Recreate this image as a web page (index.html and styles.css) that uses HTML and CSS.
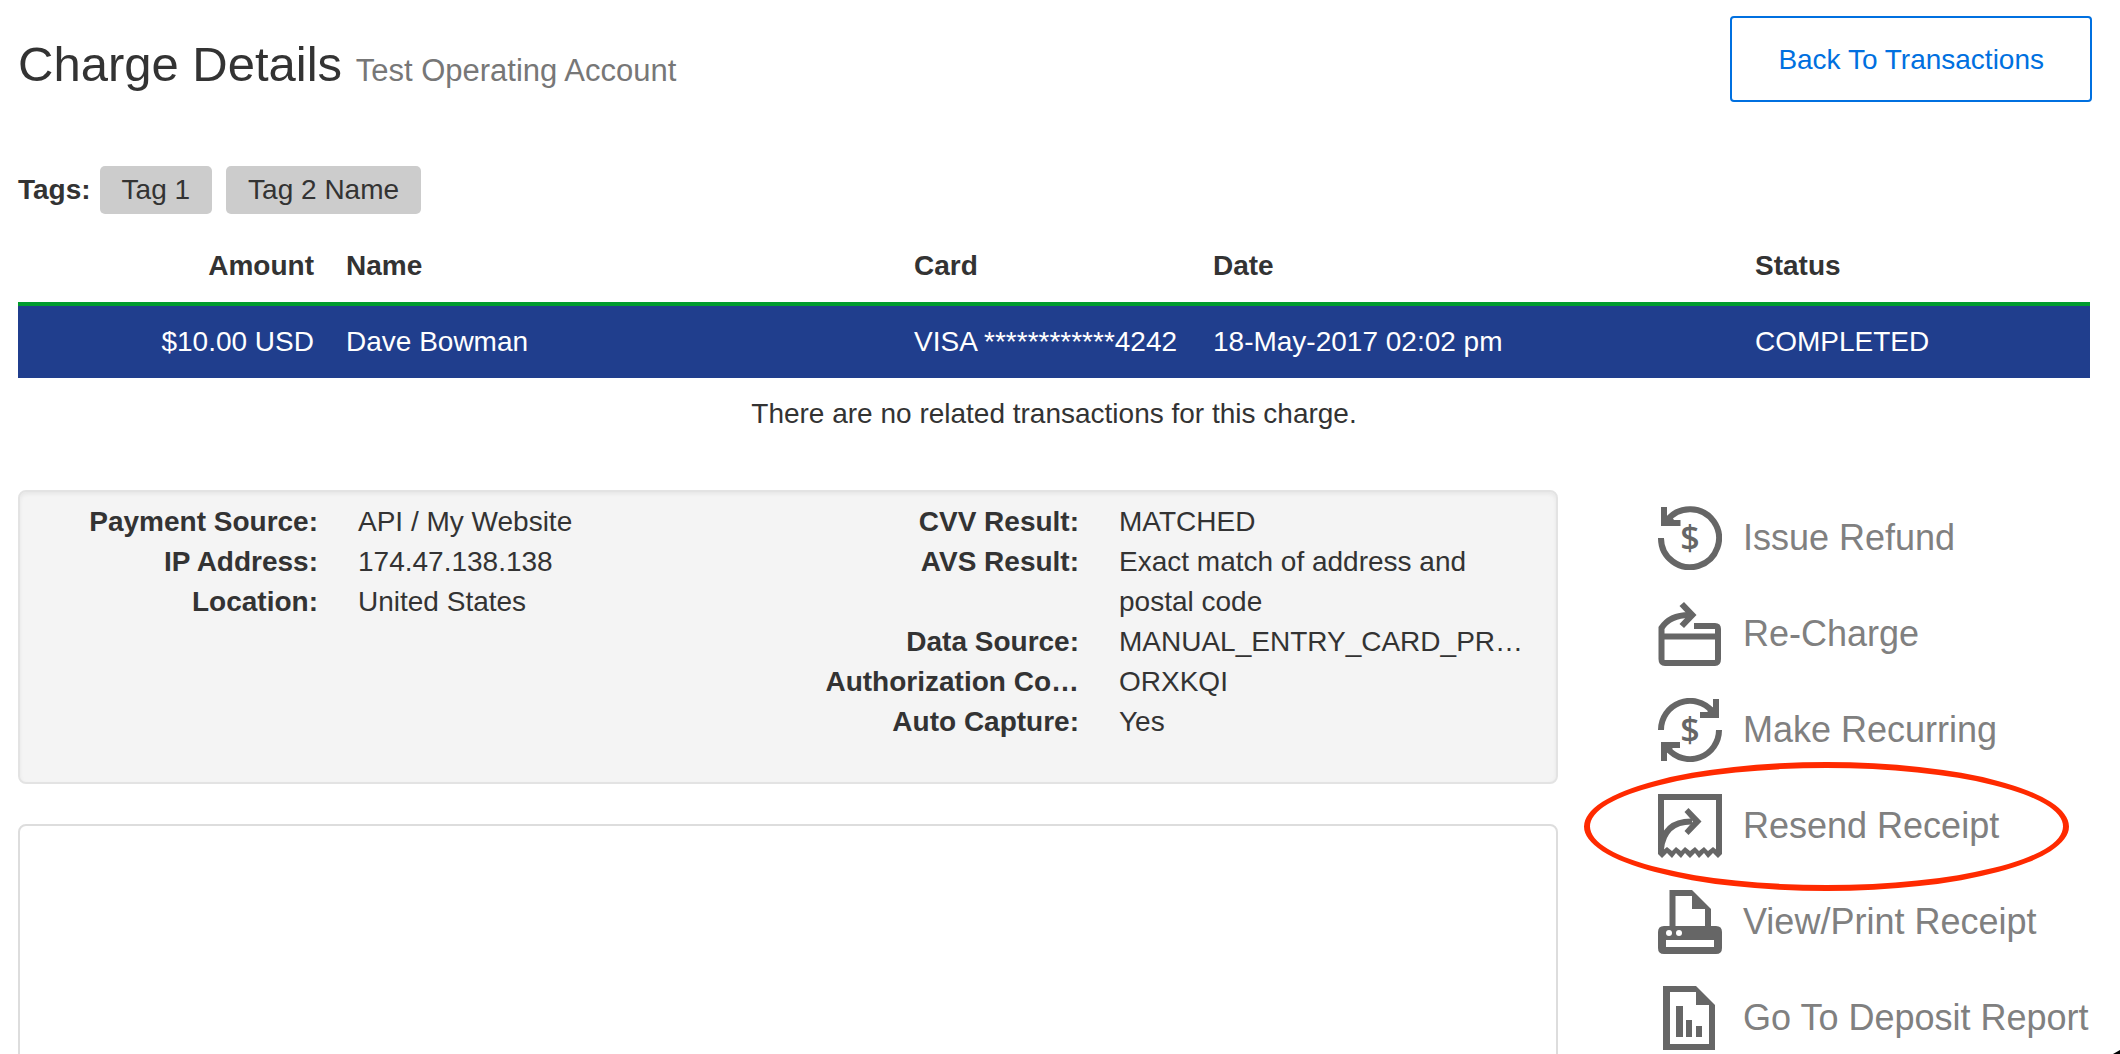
FILE: index.html
```html
<!DOCTYPE html>
<html lang="en">
<head>
    <meta charset="UTF-8">
    <meta name="viewport" content="width=device-width, initial-scale=1.0">
    <title>Charge Details</title>
    <link rel="stylesheet" href="styles.css">
</head>
<body>
    <div class="page">
        <header class="page-header">
            <h1>Charge Details <small>Test Operating Account</small></h1>
            <a class="back-btn" href="#transactions">Back To Transactions</a>
        </header>

        <div class="tags">
            <strong>Tags:</strong>
            <span class="tag">Tag 1</span>
            <span class="tag">Tag 2 Name</span>
        </div>

        <table class="charge-table">
            <thead>
                <tr>
                    <th class="col-amount">Amount</th>
                    <th>Name</th>
                    <th class="col-card">Card</th>
                    <th class="col-date">Date</th>
                    <th class="col-status">Status</th>
                </tr>
            </thead>
            <tbody>
                <tr>
                    <td class="col-amount">$10.00 USD</td>
                    <td>Dave Bowman</td>
                    <td>VISA ************4242</td>
                    <td>18-May-2017 02:02 pm</td>
                    <td>COMPLETED</td>
                </tr>
            </tbody>
        </table>
        <p class="no-related">There are no related transactions for this charge.</p>

        <div class="content">
            <main class="main">
                <section class="panel details">
                    <dl>
                        <dt>Payment Source:</dt>
                        <dd>API / My Website</dd>
                        <dt>IP Address:</dt>
                        <dd>174.47.138.138</dd>
                        <dt>Location:</dt>
                        <dd>United States</dd>
                    </dl>
                    <dl>
                        <dt>CVV Result:</dt>
                        <dd>MATCHED</dd>
                        <dt>AVS Result:</dt>
                        <dd>Exact match of address and postal code</dd>
                        <dt>Data Source:</dt>
                        <dd>MANUAL_ENTRY_CARD_PR…</dd>
                        <dt>Authorization Co…</dt>
                        <dd>ORXKQI</dd>
                        <dt>Auto Capture:</dt>
                        <dd>Yes</dd>
                    </dl>
                </section>
                <section class="panel notes"></section>
            </main>

            <nav class="actions">
                <a href="#refund">
                    <svg class="icon" viewBox="0 0 64 64" aria-hidden="true">
                        <path class="line" d="M3 32A29 29 0 1 0 9 14.500"/>
                        <path d="M3 1H9V10.500L12 8L16 14H22.500V20H3Z"/>
                        <text class="dollar" x="32" y="44">$</text>
                    </svg>
                    Issue Refund
                </a>
                <a href="#recharge">
                    <svg class="icon" viewBox="0 0 64 64" aria-hidden="true">
                        <path class="line" d="M36 24H57Q60 24 60 27V57Q60 61 57 61H7Q3.500 61 3.500 57V26Q12 13 31 13M4 34.500H60"/>
                        <path d="M26 0L38.500 13L26 26L21.500 22L30 13L21.500 4Z"/>
                    </svg>
                    Re-Charge
                </a>
                <a href="#recurring">
                    <svg class="icon" viewBox="0 0 64 64" aria-hidden="true">
                        <path class="line" d="M3 32A29 29 0 0 1 54 13M61 32A29 29 0 0 1 10 51"/>
                        <path d="M61 1V20H42V14H49L55 9V1ZM3 63V44H22V50H15L9 55V63Z"/>
                        <text class="dollar" x="32" y="44">$</text>
                    </svg>
                    Make Recurring
                </a>
                <a class="highlighted" href="#resend">
                    <svg class="icon" viewBox="0 0 64 64" aria-hidden="true">
                        <path class="line" d="M3 58V3H61V58"/>
                        <path d="M0 54L4 57L9 53L14 57L18 53L23 57L27 53L32 57L37 53L41 57L46 53L50 57L55 53L60 57L64 54V60L60 64L55 59L50 64L46 59L41 64L37 59L32 64L27 59L23 64L18 59L14 64L9 59L4 64L0 60Z"/>
                        <path class="line" d="M3 55Q6 27 34 27.500"/>
                        <path d="M30.500 14L43.500 27.500L30.500 41L26.500 37L35 27.500L26.500 18Z"/>
                    </svg>
                    Resend Receipt
                </a>
                <a href="#print">
                    <svg class="icon" viewBox="0 0 64 64" aria-hidden="true">
                        <path fill-rule="evenodd" d="M11.500 36V0H34L53 19V36H58Q64 36 64 42V58Q64 64 58 64H6Q0 64 0 58V42Q0 36 6 36ZM17.500 36H47V19H34V6H17.500ZM8 50V57H56V50Z"/>
                        <circle class="hole" cx="11" cy="43" r="3"/>
                        <circle class="hole" cx="21" cy="43" r="3"/>
                    </svg>
                    View/Print Receipt
                </a>
                <a href="#deposit">
                    <svg class="icon" viewBox="0 0 64 64" aria-hidden="true">
                        <path fill-rule="evenodd" d="M5 0H38L57 19V64H5ZM12 6V58H51V19H38V6Z"/>
                        <path d="M18 20H25V51H18ZM28 34H34V51H28ZM38 40H44V51H38Z"/>
                    </svg>
                    Go To Deposit Report
                </a>
            </nav>
        </div>
    </div>
    <span class="corner"></span>
</body>
</html>
```
FILE: styles.css
```css
*,
*::after {
    box-sizing: border-box;
}

body {
    margin: 0;
    background: #fff;
    color: #333;
    font-family: "Helvetica Neue", Helvetica, "Liberation Sans", Arial, sans-serif;
    font-size: 28px;
    line-height: 40px;
}

.page {
    height: 100vh;
    padding: 16px 30px 0 18px;
    overflow: hidden;
}

.page-header {
    display: flex;
    justify-content: space-between;
    align-items: flex-start;
    margin-right: -2px;
}

h1 {
    margin: 18px 0 0;
    font-size: 49px;
    font-weight: 300;
    line-height: 60px;
}

h1 small {
    color: #777;
    font-size: 31px;
}

.back-btn {
    padding: 22px 46px 20px;
    border: 2px solid #0070e0;
    border-radius: 4px;
    color: #0070e0;
    text-decoration: none;
}

.tags {
    display: flex;
    align-items: center;
    margin-top: 64px;
}

.tags strong {
    margin-right: 9px;
}

.tag {
    margin-right: 14px;
    padding: 4px 22px;
    border-radius: 5px;
    background: #ccc;
}

.charge-table {
    width: 100%;
    margin-top: 16px;
    border-collapse: collapse;
    table-layout: fixed;
}

.charge-table th,
.charge-table td {
    padding: 16px;
    text-align: left;
    white-space: nowrap;
}

.charge-table td {
    border-top: 4px solid #009b2e;
    background: #203e8d;
    color: #fff;
}

.charge-table .col-amount {
    width: 312px;
    text-align: right;
}

.col-card {
    width: 299px;
}

.col-date {
    width: 542px;
}

.col-status {
    width: 351px;
}

.no-related {
    margin: 16px 0 56px;
    text-align: center;
}

.content {
    display: flex;
    gap: 100px;
}

.main {
    flex: 1;
    min-width: 0;
}

.panel {
    border: 2px solid #ddd;
    border-radius: 8px;
}

.details {
    display: grid;
    grid-template-columns: 1fr 1fr;
    gap: 68px;
    margin-bottom: 40px;
    padding: 10px 38px 40px 44px;
    border-color: #e3e3e3;
    background: #f4f4f4;
    box-shadow: inset 0 2px 4px rgba(0, 0, 0, 0.06);
}

.details dl {
    display: grid;
    grid-template-columns: 254px 1fr;
    column-gap: 40px;
    align-content: start;
    min-width: 0;
    margin: 0;
}

.details dt {
    font-weight: bold;
    text-align: right;
    white-space: nowrap;
}

.details dd {
    margin: 0;
}

.notes {
    min-height: 400px;
}

.actions {
    display: flex;
    flex: 0 0 432px;
    flex-direction: column;
    gap: 32px;
    padding-top: 16px;
}

.actions a {
    display: flex;
    align-items: center;
    gap: 21px;
    color: #808080;
    font-size: 36px;
    text-decoration: none;
    white-space: nowrap;
}

.icon {
    flex: none;
    width: 64px;
    height: 64px;
    fill: #666;
}

.icon .line {
    fill: none;
    stroke: #666;
    stroke-width: 6;
}

.icon .dollar {
    font-family: "Open Sans", sans-serif;
    font-size: 34px;
    font-weight: 600;
    text-anchor: middle;
}

.icon .hole {
    fill: #fff;
}

.highlighted {
    position: relative;
}

/* red ring around the action */
.highlighted::after {
    content: "";
    position: absolute;
    top: -32px;
    left: -74px;
    width: 485px;
    height: 129px;
    border: 6px solid #ff2a00;
    border-radius: 50%;
    pointer-events: none;
}

/* dark edge of the window's rounded corner */
.corner {
    position: fixed;
    right: 0;
    bottom: 0;
    width: 7px;
    height: 4px;
    background: #000;
    clip-path: polygon(100% 0, 100% 100%, 0 100%);
}
```
